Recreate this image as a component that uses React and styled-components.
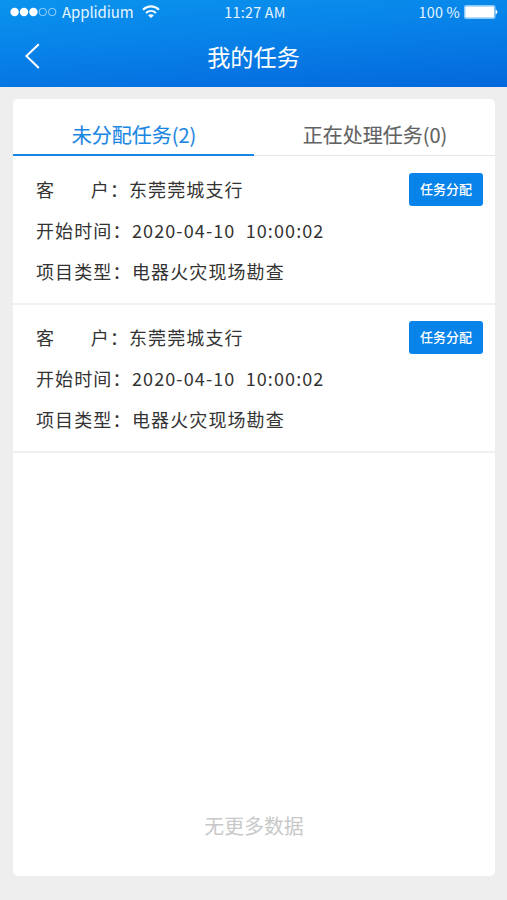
import React from 'react';
import styled, { createGlobalStyle } from 'styled-components';

const GlobalStyle = createGlobalStyle`
  *, *::before, *::after { box-sizing: border-box; }
  body {
    margin: 0;
    background: #eeeeee;
    font-family: "Noto Sans CJK SC", "Noto Sans", sans-serif;
  }
`;

const Screen = styled.div`
  width: 100%;
  max-width: 507px;
  height: 900px;
  display: flex;
  flex-direction: column;
  background: #eeeeee;
  overflow: hidden;
`;

const Header = styled.header`
  height: 87px;
  flex: none;
  color: #fff;
  background: linear-gradient(176deg, #0a93ed 0%, #0886ea 35%, #0468dc 100%);
`;

const StatusBar = styled.div`
  display: grid;
  grid-template-columns: 1fr auto 1fr;
  align-items: center;
  height: 24px;
  padding: 0 9px 0 10px;
  color: #e6f5ff;
  font-size: 14.4px;
  line-height: 22px;
`;

const Clock = styled.span`
  padding-left: 2px;
  letter-spacing: 0.25px;
`;

const Carrier = styled.div`
  display: flex;
  align-items: center;
`;

const SignalIcon = styled.svg`
  width: 47px;
  height: 10px;
  margin-right: 5px;
`;

const CarrierName = styled.span`
  width: 72px;
  font-size: 15px;
  letter-spacing: -0.1px;
`;

const WifiIcon = styled.svg`
  width: 18px;
  height: 14px;
  margin-left: 8px;
`;

const Power = styled.div`
  display: flex;
  align-items: center;
  justify-content: flex-end;
  gap: 4px;
`;

const Percent = styled.span`
  letter-spacing: 0.2px;
`;

const BatteryIcon = styled.svg`
  width: 34px;
  height: 14px;
`;

const NavBar = styled.div`
  display: grid;
  grid-template-columns: 64px 1fr 64px;
  align-items: center;
  height: 63px;
`;

const BackButton = styled.button`
  display: flex;
  width: 64px;
  padding: 1px 0 0 23px;
  border: 0;
  background: none;
  color: #fff;
`;

const Title = styled.h1`
  margin: 0;
  padding-top: 2px;
  text-align: center;
  font-size: 23.2px;
  font-weight: 400;
  line-height: 61px;
`;

const Card = styled.main`
  display: flex;
  flex-direction: column;
  flex: 1;
  margin: 12px 12px 24px 13px;
  border-radius: 5px;
  background: #fff;
  overflow: hidden;
`;

const Tabs = styled.div`
  display: grid;
  grid-template-columns: 1fr 1fr;
  height: 58px;
  flex: none;
  padding-bottom: 1px;
`;

const Tab = styled.button`
  padding: 15px 0 0 1px;
  border: 0;
  box-shadow: inset 0 ${(p) => (p.$active ? '-2px #1a86e3' : '-1px #e2e5ea')};
  background: none;
  color: ${(p) => (p.$active ? '#1a86e3' : '#626262')};
  font: inherit;
  font-size: 20px;
  font-weight: 400;
  line-height: 42px;
  -webkit-text-stroke: 0.12px currentColor;
`;

const TaskItem = styled.article`
  display: flex;
  justify-content: space-between;
  align-items: flex-start;
  height: 148px;
  flex: none;
  padding: 12px 12px 0 23px;
  border-bottom: 2px solid #f0f0f0;
`;

const Fields = styled.div`
  display: flex;
  flex-direction: column;
`;

const Field = styled.div`
  display: flex;
  height: 41px;
  color: #333;
  font-size: 18px;
  letter-spacing: 1.1px;
  line-height: 40px;
  white-space: pre;
`;

const Label = styled.span`
  display: flex;
  justify-content: space-between;
  width: ${(p) => p.$width || 96}px;
`;

const AssignButton = styled.button`
  width: 74px;
  height: 33px;
  margin-top: 4px;
  padding: 0 0 2px;
  border: 0;
  border-radius: 3px;
  background: #0883e9;
  color: #fff;
  font: inherit;
  font-size: 13px;
  font-weight: 500;
  line-height: 30px;
`;

const Empty = styled.p`
  margin: auto 0 30px;
  color: #c8c8c8;
  text-align: center;
  font-size: 19.9px;
  line-height: 40px;
`;

const tasks = [
  { id: 1, customer: '东莞莞城支行', start: '2020-04-10  10:00:02', type: '电器火灾现场勘查' },
  { id: 2, customer: '东莞莞城支行', start: '2020-04-10  10:00:02', type: '电器火灾现场勘查' },
];

function Signal() {
  return (
    <SignalIcon viewBox="0 0 47 10">
      {[4.6, 14, 23.4].map((x) => <circle key={x} cx={x} cy="5" r="4.2" fill="#fff" />)}
      {[32.8, 42.2].map((x) => (
        <circle key={x} cx={x} cy="5" r="3.7" fill="none" stroke="#a6d8fd" strokeWidth="0.9" />
      ))}
    </SignalIcon>
  );
}

function Wifi() {
  return (
    <WifiIcon viewBox="0 0 18 14" fill="none" stroke="#f2faff" strokeWidth="2.1">
      <path d="M1 4.7C5.6.2 12.4.2 17 4.7" />
      <path d="M4 8.1c3-2.8 7-2.8 10 0" />
      <path d="M9 13 6.1 10.4c1.6-1.5 4.2-1.5 5.8 0z" fill="#f2faff" stroke="none" />
    </WifiIcon>
  );
}

function Battery() {
  return (
    <BatteryIcon viewBox="0 0 34 14">
      <rect x="0.5" y="0.5" width="30.5" height="13" rx="1.2" fill="none" stroke="#8fcbf8" />
      <rect x="1.2" y="1.3" width="29.1" height="11.4" fill="#fff" />
      <path d="M31.6 4.6c2.4.8 2.4 4 0 4.8z" fill="#fff" />
    </BatteryIcon>
  );
}

function Task({ task }) {
  return (
    <TaskItem>
      <Fields>
        <Field>
          <Label $width={93}><span>客</span><span>户：</span></Label>
          {task.customer}
        </Field>
        <Field><Label>开始时间：</Label>{task.start}</Field>
        <Field><Label>项目类型：</Label>{task.type}</Field>
      </Fields>
      <AssignButton>任务分配</AssignButton>
    </TaskItem>
  );
}

export default function App() {
  return (
    <>
      <GlobalStyle />
      <Screen>
        <Header>
          <StatusBar>
            <Carrier>
              <Signal />
              <CarrierName>Applidium</CarrierName>
              <Wifi />
            </Carrier>
            <Clock>11:27 AM</Clock>
            <Power>
              <Percent>100 %</Percent>
              <Battery />
            </Power>
          </StatusBar>
          <NavBar>
            <BackButton aria-label="返回">
              <svg width="18" height="28" viewBox="0 0 18 28" fill="none" stroke="currentColor" strokeWidth="2">
                <path d="M15.8 2.2 3.4 14 15.8 26" />
              </svg>
            </BackButton>
            <Title>我的任务</Title>
          </NavBar>
        </Header>
        <Card>
          <Tabs>
            <Tab $active>未分配任务(2)</Tab>
            <Tab>正在处理任务(0)</Tab>
          </Tabs>
          {tasks.map((task) => <Task key={task.id} task={task} />)}
          <Empty>无更多数据</Empty>
        </Card>
      </Screen>
    </>
  );
}
